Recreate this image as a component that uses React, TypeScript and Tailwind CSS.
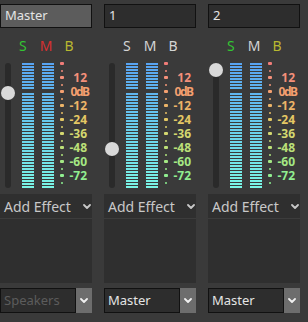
import React from 'react';

type Strip = {
  name: string;
  nameActive?: boolean;
  solo: boolean;
  mute: boolean;
  bypass: boolean;
  knobTop: number;
  output: string;
  outputDisabled?: boolean;
};

const strips: Strip[] = [
  { name: 'Master', nameActive: true, solo: true, mute: true, bypass: true, knobTop: 26, output: 'Speakers', outputDisabled: true },
  { name: '1', solo: false, mute: false, bypass: false, knobTop: 82, output: 'Master' },
  { name: '2', solo: true, mute: false, bypass: true, knobTop: 3, output: 'Master' },
];

const font = { fontFamily: '"Noto Sans", "Open Sans", sans-serif' };

function mix(a: number[], b: number[], t: number) {
  const c = a.map((v, i) => Math.round(v + (b[i] - v) * t));
  return `rgb(${c[0]}, ${c[1]}, ${c[2]})`;
}

const TOP = [88, 164, 242];
const BOTTOM = [122, 245, 230];

function Segments({ from, count }: { from: number; count: number }) {
  return (
    <div className="flex flex-col gap-[1px]">
      {Array.from({ length: count }).map((_, i) => (
        <div key={i} className="h-[2px] w-[12px]" style={{ backgroundColor: mix(TOP, BOTTOM, (from + i) / 40) }} />
      ))}
    </div>
  );
}

function MeterColumn() {
  return (
    <div className="flex flex-col pt-[3px]">
      <Segments from={0} count={9} />
      <div className="mt-[4px]">
        <Segments from={9} count={32} />
      </div>
    </div>
  );
}

const scaleColors = ['#f07c78', '#f28a7a', '#f4907a', '#f49878', '#f4a070', '#f0a86c', '#ecb468', '#e8be66', '#e4c864', '#dcd068', '#d4d870', '#c8dc74', '#bce078', '#b0e47e', '#a4e884', '#9aeb8a', '#90ee90', '#8cf090'];
const labels: Record<number, string> = { 2: '12', 4: '0dB', 6: '-12', 8: '-24', 10: '-36', 12: '-48', 14: '-60', 16: '-72' };

function Scale() {
  return (
    <div className="flex flex-col">
      {scaleColors.map((c, i) => {
        const major = i % 2 === 0;
        const label = labels[i];
        return (
          <div key={i} className="h-[7px] flex items-center">
            <div className="w-[4px] flex justify-center">
              {major ? (
                <div className="w-[4px] h-[3px] rounded-[1px]" style={{ backgroundColor: c }} />
              ) : (
                <div className="w-[2px] h-[2px] rounded-[1px]" style={{ backgroundColor: c }} />
              )}
            </div>
            {label && (
              <div className="w-[23px] h-[7px] flex justify-end">
                <span
                  className={`text-[12px] font-bold leading-[7px] whitespace-nowrap ${label === '0dB' ? 'tracking-[-1.5px] mr-[-1.5px]' : ''}`}
                  style={{ color: c }}
                >
                  {label}
                </span>
              </div>
            )}
          </div>
        );
      })}
    </div>
  );
}

function Chevron({ className }: { className: string }) {
  return (
    <svg viewBox="0 0 8 5" className={className} fill="none" stroke="currentColor" strokeWidth="1.8" strokeLinecap="round" strokeLinejoin="round">
      <polyline points="1,1 4,4 7,1" />
    </svg>
  );
}

function ChannelStrip({ s }: { s: Strip }) {
  return (
    <div className="w-[92px] flex flex-col pt-[4px]">
      <div className={`h-[24px] border border-[#111] flex items-center pl-[4px] text-[13px] text-[#e4e4e4] ${s.nameActive ? 'bg-[#5c5c5c]' : 'bg-[#2d2d2d]'}`}>
        {s.name}
      </div>

      <div className="h-[32px] flex items-center text-[14px] pt-[2px]">
        <span className={`ml-[19px] ${s.solo ? 'text-[#33c433]' : 'text-[#d4d4d4]'}`}>S</span>
        <span className={`ml-[13px] ${s.mute ? 'text-[#d83030]' : 'text-[#d4d4d4]'}`}>M</span>
        <span className={`ml-[12px] ${s.bypass ? 'text-[#b8b830]' : 'text-[#d4d4d4]'}`}>B</span>
      </div>

      <div className="h-[134px] flex">
        <div className="relative w-[16px]">
          <div className="absolute left-[5px] top-[3px] w-[6px] h-[125px] rounded-full bg-[#2a2a2a]" />
          <div className="absolute left-[1px] w-[14px] h-[14px] rounded-full bg-[#d9d9d9]" style={{ top: s.knobTop }} />
        </div>
        <div className="ml-[6px]">
          <MeterColumn />
        </div>
        <div className="ml-[8px]">
          <MeterColumn />
        </div>
        <div className="ml-[6px]">
          <Scale />
        </div>
      </div>

      <div className="h-[89px] bg-[#2f2f2f] flex flex-col">
        <div className="h-[25px] flex items-center pl-[4px] pr-[1px] text-[14px] text-[#c8c8c8] border-b border-[#3c3c3c]">
          <span className="flex-1">Add Effect</span>
          <Chevron className="w-[8px] h-[5px] text-[#c8c8c8]" />
        </div>
      </div>

      <div className="mt-[5px] h-[25px] flex">
        <div className={`flex-1 border border-[#111] bg-[#2d2d2d] flex items-center pl-[3px] text-[13px] ${s.outputDisabled ? 'text-[#5c5c5c]' : 'text-[#e4e4e4]'}`}>
          {s.output}
        </div>
        <div className="w-[16px] bg-[#6d6d6d] flex items-center justify-center">
          <Chevron className="w-[8px] h-[5px] text-[#f0f0f0]" />
        </div>
      </div>
    </div>
  );
}

export default function App() {
  return (
    <div className="w-[308px] h-[322px] bg-[#3a3a3a] flex gap-[12px] overflow-hidden" style={font}>
      {strips.map((s, i) => (
        <ChannelStrip key={i} s={s} />
      ))}
    </div>
  );
}
